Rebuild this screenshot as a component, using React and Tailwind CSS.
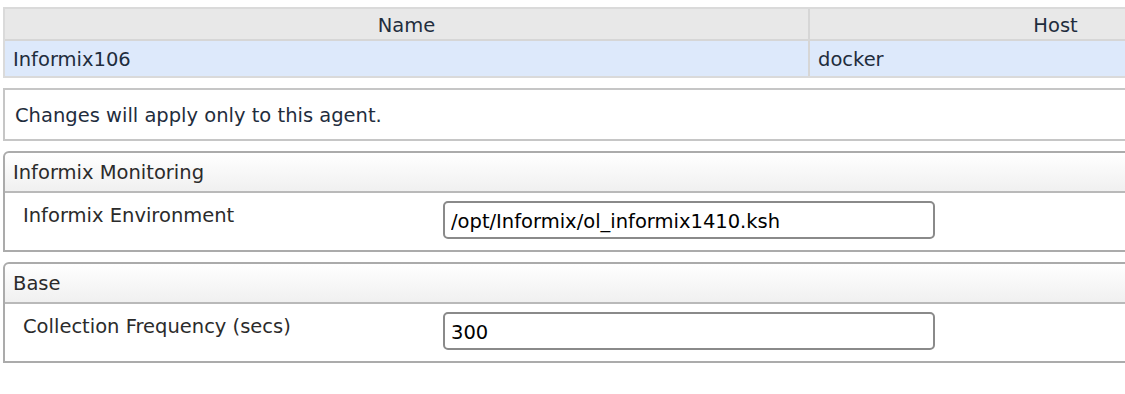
import React from 'react'

const font = { fontFamily: '"DejaVu Sans", Verdana, sans-serif' }

function Panel({ title, label, value }) {
  return (
    <div className="mt-[10px] w-[1140px] border-2 border-[#ababab] rounded-tl-[6px] bg-white">
      <div className="h-[40px] flex items-center pl-[8px] pt-[1px] text-[19.5px] text-[#2b2b2b] bg-gradient-to-b from-white to-[#f0f0f0] border-b-2 border-[#b9b9b9] rounded-tl-[6px]">
        {title}
      </div>
      <div className="h-[57px] flex items-start">
        <div className="w-[438px] pl-[18px] pt-[8px] text-[19.5px] text-[#2b2b2b]">{label}</div>
        <div className="pt-[8px]">
          <input
            readOnly
            value={value}
            className="w-[492px] h-[38px] px-[6px] pt-[2px] text-[19.5px] text-black border-2 border-[#8a8a8a] rounded-[5px] outline-none bg-white"
            style={font}
          />
        </div>
      </div>
    </div>
  )
}

export default function App() {
  return (
    <div className="w-[1125px] h-[394px] overflow-hidden bg-white pt-[7px] pl-[3px]" style={font}>
      <div className="w-[1300px] border-2 border-[#dadada]">
        <div className="flex h-[32px] bg-[#e8e8e8] border-b-2 border-[#d6d6d6] text-[19.5px] text-[#1f2d3d]">
          <div className="w-[805px] flex items-center justify-center pt-[4px] border-r-2 border-[#d6d6d6]">Name</div>
          <div className="flex-1 flex items-center justify-center pt-[4px]">Host</div>
        </div>
        <div className="flex h-[35px] bg-[#dde9fb] text-[19.5px] text-[#1f2d3d]">
          <div className="w-[805px] flex items-center pl-[8px] pt-[3px] border-r-2 border-[#d6d6d6]">Informix106</div>
          <div className="flex-1 flex items-center pl-[8px] pt-[3px]">docker</div>
        </div>
      </div>

      <div className="mt-[10px] w-[1140px] h-[53px] border-2 border-[#c6c6c6] flex items-center pl-[10px] pt-[3px] text-[19.5px] text-[#1f2d3d]">
        Changes will apply only to this agent.
      </div>

      <Panel title="Informix Monitoring" label="Informix Environment" value="/opt/Informix/ol_informix1410.ksh" />
      <Panel title="Base" label="Collection Frequency (secs)" value="300" />
    </div>
  )
}
